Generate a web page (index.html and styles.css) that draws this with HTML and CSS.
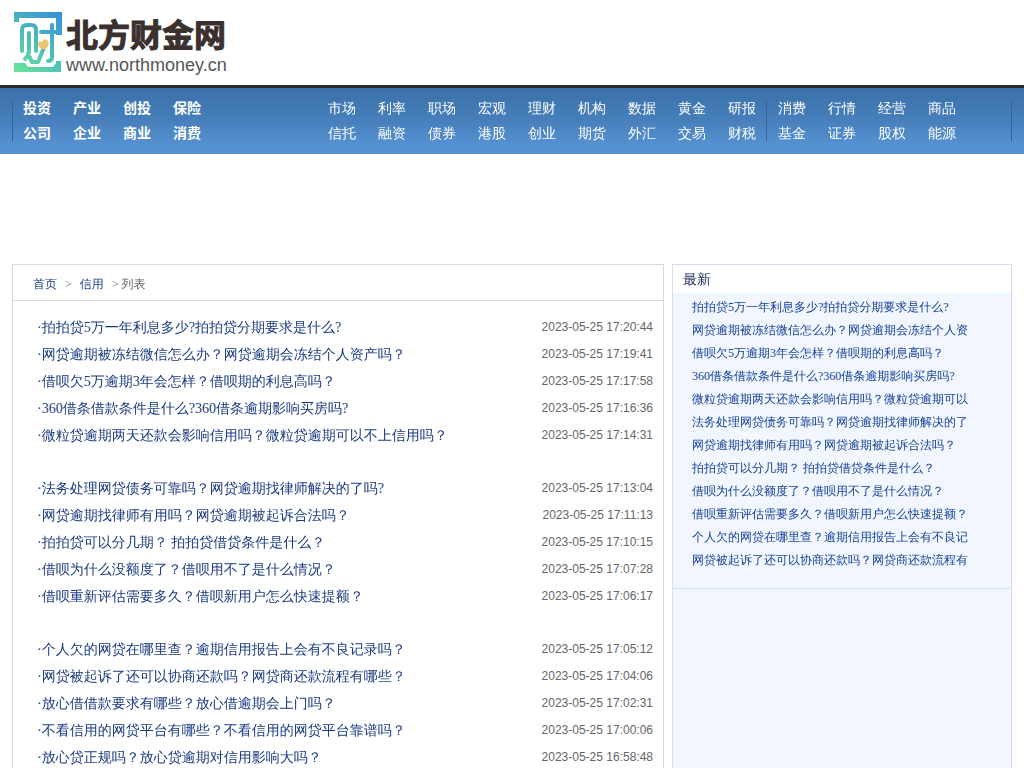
FILE: index.html
```html
<!DOCTYPE html>
<html lang="zh-CN">
<head>
<meta charset="utf-8">
<title>北方财金网</title>
<link rel="stylesheet" href="styles.css">
</head>
<body>
<header class="top">
  <a class="logo" href="#" aria-label="北方财金网">
    <svg class="mark" viewBox="0 0 48 60" fill="none">
      <defs><linearGradient id="g" gradientUnits="userSpaceOnUse" x1="0" y1="60" x2="44" y2="0"><stop offset="0" stop-color="#6be596"/><stop offset="0.5" stop-color="#4cbcbc"/><stop offset="1" stop-color="#3590da"/></linearGradient></defs>
      <path fill="url(#g)" d="M0 0H48V23H42V6H5V10H0ZM0 51H11L14 55H39L42 51V49H47V60H0Z"/>
      <path stroke="url(#g)" stroke-width="4" stroke-linecap="round" stroke-linejoin="round" d="M8 39V18Q8 13 13 13H17Q22 13 22 18V39M15 21V38Q15 43 11 47M14 42L18 50H24L31 33M27 20H44M38 13V45Q38 49 34 49"/>
      <path fill="#e8c66b" d="M24 31Q25 28 28 30Q30 26 33 28Q36 30 34 34Q32 38 28 37Q24 36 24 31Z"/>
    </svg>
    <span class="words"><span class="name">北方财金网</span><span class="site">www.northmoney.cn</span></span>
  </a>
</header>
<nav class="nav">
  <div class="wrap nav-in">
    <div class="group strong"><a href="#">投资</a><a href="#">产业</a><a href="#">创投</a><a href="#">保险</a><a href="#">公司</a><a href="#">企业</a><a href="#">商业</a><a href="#">消费</a></div>
    <div class="group mid"><a href="#">市场</a><a href="#">利率</a><a href="#">职场</a><a href="#">宏观</a><a href="#">理财</a><a href="#">机构</a><a href="#">数据</a><a href="#">黄金</a><a href="#">研报</a><a href="#">信托</a><a href="#">融资</a><a href="#">债券</a><a href="#">港股</a><a href="#">创业</a><a href="#">期货</a><a href="#">外汇</a><a href="#">交易</a><a href="#">财税</a></div>
    <div class="group end"><a href="#">消费</a><a href="#">行情</a><a href="#">经营</a><a href="#">商品</a><a href="#">基金</a><a href="#">证券</a><a href="#">股权</a><a href="#">能源</a></div>
  </div>
</nav>
<div class="wrap main">
  <main class="content">
    <div class="crumbs"><a href="#">首页</a><span>&gt;</span><a href="#">信用</a><span>&gt; 列表</span></div>
    <div class="lists">
      <ul class="list">
        <li><a href="#">·拍拍贷5万一年利息多少?拍拍贷分期要求是什么?</a><time>2023-05-25 17:20:44</time></li>
        <li><a href="#">·网贷逾期被冻结微信怎么办？网贷逾期会冻结个人资产吗？</a><time>2023-05-25 17:19:41</time></li>
        <li><a href="#">·借呗欠5万逾期3年会怎样？借呗期的利息高吗？</a><time>2023-05-25 17:17:58</time></li>
        <li><a href="#">·360借条借款条件是什么?360借条逾期影响买房吗?</a><time>2023-05-25 17:16:36</time></li>
        <li><a href="#">·微粒贷逾期两天还款会影响信用吗？微粒贷逾期可以不上信用吗？</a><time>2023-05-25 17:14:31</time></li>
      </ul>
      <ul class="list">
        <li><a href="#">·法务处理网贷债务可靠吗？网贷逾期找律师解决的了吗?</a><time>2023-05-25 17:13:04</time></li>
        <li><a href="#">·网贷逾期找律师有用吗？网贷逾期被起诉合法吗？</a><time>2023-05-25 17:11:13</time></li>
        <li><a href="#">·拍拍贷可以分几期？ 拍拍贷借贷条件是什么？</a><time>2023-05-25 17:10:15</time></li>
        <li><a href="#">·借呗为什么没额度了？借呗用不了是什么情况？</a><time>2023-05-25 17:07:28</time></li>
        <li><a href="#">·借呗重新评估需要多久？借呗新用户怎么快速提额？</a><time>2023-05-25 17:06:17</time></li>
      </ul>
      <ul class="list">
        <li><a href="#">·个人欠的网贷在哪里查？逾期信用报告上会有不良记录吗？</a><time>2023-05-25 17:05:12</time></li>
        <li><a href="#">·网贷被起诉了还可以协商还款吗？网贷商还款流程有哪些？</a><time>2023-05-25 17:04:06</time></li>
        <li><a href="#">·放心借借款要求有哪些？放心借逾期会上门吗？</a><time>2023-05-25 17:02:31</time></li>
        <li><a href="#">·不看信用的网贷平台有哪些？不看信用的网贷平台靠谱吗？</a><time>2023-05-25 17:00:06</time></li>
        <li><a href="#">·放心贷正规吗？放心贷逾期对信用影响大吗？</a><time>2023-05-25 16:58:48</time></li>
      </ul>
    </div>
  </main>
  <aside class="side">
    <h2>最新</h2>
    <ul class="latest">
      <li><a href="#">拍拍贷5万一年利息多少?拍拍贷分期要求是什么?</a></li>
      <li><a href="#">网贷逾期被冻结微信怎么办？网贷逾期会冻结个人资</a></li>
      <li><a href="#">借呗欠5万逾期3年会怎样？借呗期的利息高吗？</a></li>
      <li><a href="#">360借条借款条件是什么?360借条逾期影响买房吗?</a></li>
      <li><a href="#">微粒贷逾期两天还款会影响信用吗？微粒贷逾期可以</a></li>
      <li><a href="#">法务处理网贷债务可靠吗？网贷逾期找律师解决的了</a></li>
      <li><a href="#">网贷逾期找律师有用吗？网贷逾期被起诉合法吗？</a></li>
      <li><a href="#">拍拍贷可以分几期？ 拍拍贷借贷条件是什么？</a></li>
      <li><a href="#">借呗为什么没额度了？借呗用不了是什么情况？</a></li>
      <li><a href="#">借呗重新评估需要多久？借呗新用户怎么快速提额？</a></li>
      <li><a href="#">个人欠的网贷在哪里查？逾期信用报告上会有不良记</a></li>
      <li><a href="#">网贷被起诉了还可以协商还款吗？网贷商还款流程有</a></li>
    </ul>
  </aside>
</div>
</body>
</html>
```
FILE: styles.css
```css
* { box-sizing: border-box; }
body {
  margin: 0;
  background: #fff;
  color: #666;
  font: 12px/23px "Liberation Serif", "WenQuanYi Zen Hei", "Droid Sans Fallback", serif;
}
a { color: inherit; text-decoration: none; }
ul { list-style: none; margin: 0; padding: 0; }
.wrap { width: 100%; max-width: 1000px; margin: 0 auto; }

.top { padding: 12px 14px 9px; }
.logo { display: flex; gap: 4px; height: 64px; }
.mark { width: 48px; height: 60px; }
.words { display: flex; flex-direction: column; color: #3a302e; white-space: nowrap; }
.name { font: bold 32px/42px "Noto Sans CJK SC", sans-serif; -webkit-text-stroke: 1px #3a302e; }
.site { font: 18px/22px "Liberation Sans", sans-serif; color: #555; }

.nav {
  border-top: 3px solid #2b2b2b;
  background: linear-gradient(#3a70a8, #4780bc 50%, #5590d0 85%, #5590d0);
  color: #fff;
  font-size: 14px;
  line-height: 25px;
}
.nav-in {
  display: flex;
  justify-content: space-between;
  padding: 8px 0;
  background:
    linear-gradient(#356494, #356494) left center / 1px 40px no-repeat,
    linear-gradient(#356494, #356494) right center / 1px 40px no-repeat;
}
.group { display: grid; grid-template-columns: repeat(4, 50px); }
.strong { padding-left: 11px; font-family: "Liberation Serif", "Noto Sans CJK SC", serif; font-weight: bold; }
.mid { grid-template-columns: repeat(9, 50px); margin-left: auto; margin-right: -12px; }
.end { width: 246px; padding-left: 12px; background: linear-gradient(#356494, #356494) left center / 1px 40px no-repeat; }

.main { display: flex; gap: 8px; padding-top: 110px; }
.content { flex: 1; border: 1px solid #d9d9d9; border-bottom: 0; }
.crumbs {
  display: flex;
  gap: 8px;
  padding: 8px 20px 4px;
  border-bottom: 1px solid #d9d9d9;
}
.crumbs a { color: #1a3f86; }
.lists { padding: 13px 10px 0 24px; }
.list + .list { margin-top: 26px; }
.list li { display: flex; justify-content: space-between; line-height: 27px; }
.list a { font-size: 14px; color: #1a3a80; }
.list time { font-family: "Liberation Sans", sans-serif; color: #666; }

.side { width: 340px; border: 1px solid #d5dfee; border-bottom: 0; background: #f2f7ff; }
.side h2 { margin: 0; padding: 2px 10px 0; background: #fff; color: #223060; font-size: 14px; font-weight: normal; line-height: 26px; }
.latest { padding: 3px 0 16px 19px; border-bottom: 1px solid #d5dfee; }
.latest a { color: #134098; }
```
